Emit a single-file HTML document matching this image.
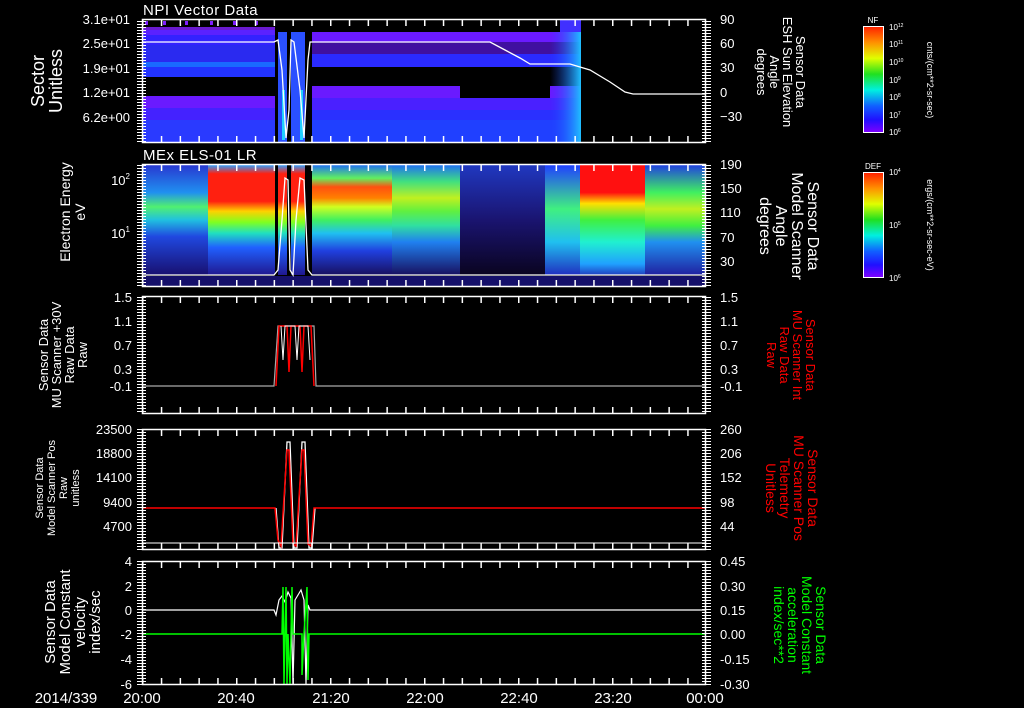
<!DOCTYPE html>
<html><head><meta charset="utf-8"><style>
html,body{margin:0;padding:0;background:#000;}
svg{display:block;}
text{font-family:"Liberation Sans",sans-serif;fill:#fff;}
</style></head><body>
<svg width="1024" height="708" viewBox="0 0 1024 708" xmlns="http://www.w3.org/2000/svg">
<defs>
<pattern id="xt" x="142" y="0" width="18.8" height="10" patternUnits="userSpaceOnUse"><rect width="1.5" height="10" fill="#fff"/></pattern>
<pattern id="yt" x="0" y="0" width="10" height="3" patternUnits="userSpaceOnUse"><rect width="10" height="1" fill="#fff"/></pattern>
<linearGradient id="cb" x1="0" y1="0" x2="0" y2="1">
<stop offset="0" stop-color="#ff2000"/><stop offset="0.15" stop-color="#ff9000"/><stop offset="0.3" stop-color="#e0ff00"/><stop offset="0.45" stop-color="#20e020"/><stop offset="0.6" stop-color="#00f0e0"/><stop offset="0.75" stop-color="#1060ff"/><stop offset="0.88" stop-color="#2010ff"/><stop offset="1" stop-color="#8000ff"/></linearGradient>
<linearGradient id="g1" x1="0" y1="0" x2="0" y2="1"><stop offset="0" stop-color="#2838d0"/><stop offset="0.25" stop-color="#2090f0"/><stop offset="0.38" stop-color="#50f070"/><stop offset="0.5" stop-color="#20c0e0"/><stop offset="0.65" stop-color="#2048e0"/><stop offset="1" stop-color="#181070"/></linearGradient>
<linearGradient id="g2" x1="0" y1="0" x2="0" y2="1"><stop offset="0" stop-color="#30a0ff"/><stop offset="0.08" stop-color="#ff2010"/><stop offset="0.33" stop-color="#ff2010"/><stop offset="0.42" stop-color="#ffd000"/><stop offset="0.52" stop-color="#80ff20"/><stop offset="0.62" stop-color="#20e0c0"/><stop offset="0.75" stop-color="#2060ff"/><stop offset="1" stop-color="#201890"/></linearGradient>
<linearGradient id="g3" x1="0" y1="0" x2="0" y2="1"><stop offset="0" stop-color="#2070f0"/><stop offset="0.12" stop-color="#60f060"/><stop offset="0.2" stop-color="#ff5010"/><stop offset="0.3" stop-color="#ff8000"/><stop offset="0.38" stop-color="#d0ff20"/><stop offset="0.5" stop-color="#40f060"/><stop offset="0.62" stop-color="#20c0f0"/><stop offset="0.78" stop-color="#2040e0"/><stop offset="1" stop-color="#181060"/></linearGradient>
<linearGradient id="g3b" x1="0" y1="0" x2="0" y2="1"><stop offset="0" stop-color="#2070f0"/><stop offset="0.15" stop-color="#40e080"/><stop offset="0.3" stop-color="#c0f020"/><stop offset="0.42" stop-color="#60f040"/><stop offset="0.55" stop-color="#30e0a0"/><stop offset="0.7" stop-color="#2080f0"/><stop offset="1" stop-color="#181060"/></linearGradient>
<linearGradient id="g4" x1="0" y1="0" x2="0" y2="1"><stop offset="0" stop-color="#2040ff"/><stop offset="0.4" stop-color="#40f080"/><stop offset="0.7" stop-color="#20c0f0"/><stop offset="1" stop-color="#2030c0"/></linearGradient>
<linearGradient id="g5" x1="0" y1="0" x2="0" y2="1"><stop offset="0" stop-color="#ff1010"/><stop offset="0.25" stop-color="#ff1010"/><stop offset="0.35" stop-color="#ffe000"/><stop offset="0.5" stop-color="#40f040"/><stop offset="0.7" stop-color="#20f0d0"/><stop offset="0.9" stop-color="#20a0ff"/><stop offset="1" stop-color="#2040c0"/></linearGradient>
<linearGradient id="g6" x1="0" y1="0" x2="0" y2="1"><stop offset="0" stop-color="#2040e0"/><stop offset="0.25" stop-color="#40f060"/><stop offset="0.4" stop-color="#c0f020"/><stop offset="0.55" stop-color="#40f040"/><stop offset="0.7" stop-color="#2090f0"/><stop offset="1" stop-color="#2020a0"/></linearGradient>
<linearGradient id="gs" x1="0" y1="0" x2="0" y2="1"><stop offset="0" stop-color="#2038c0"/><stop offset="0.5" stop-color="#1a1470"/><stop offset="1" stop-color="#0a0420"/></linearGradient>
<linearGradient id="gc" x1="0" y1="0" x2="1" y2="0"><stop offset="0" stop-color="#2040ff" stop-opacity="0"/><stop offset="1" stop-color="#20c0ff"/></linearGradient>
</defs>

<g>
<rect x="143" y="30" width="132" height="5" fill="#5a22ff"/>
<rect x="143" y="35" width="132" height="10" fill="#3322ff"/>
<rect x="143" y="45" width="132" height="17" fill="#2a2af0"/>
<rect x="143" y="62" width="132" height="5" fill="#1a6aff"/>
<rect x="143" y="67" width="132" height="10" fill="#2233ff"/>
<rect x="143" y="96" width="132" height="12" fill="#6a1aff"/>
<rect x="143" y="108" width="132" height="12" fill="#4422ff"/>
<rect x="143" y="120" width="132" height="22" fill="#2a3aff"/>
<rect x="145" y="21" width="3" height="4" fill="#8020ff"/><rect x="163" y="21" width="3" height="4" fill="#8020ff"/><rect x="185" y="21" width="3" height="4" fill="#8020ff"/><rect x="210" y="21" width="3" height="4" fill="#8020ff"/><rect x="233" y="21" width="3" height="4" fill="#8020ff"/><rect x="255" y="21" width="3" height="4" fill="#8020ff"/>
<rect x="143" y="27" width="132" height="3" fill="#6a1ad0"/>
<rect x="278" y="32" width="9" height="110" fill="#2a50ff"/>
<rect x="291" y="32" width="14" height="110" fill="#2a50ff"/>
<rect x="282" y="90" width="3" height="50" fill="#20d0ff"/>
<rect x="300" y="90" width="3" height="50" fill="#20d0ff"/>
<rect x="312" y="32" width="269" height="10" fill="#6a1aff"/>
<rect x="312" y="42" width="269" height="12" fill="#4010a0"/>
<rect x="312" y="54" width="269" height="13" fill="#2a2aff"/>
<rect x="312" y="86" width="269" height="12" fill="#6a1aff"/>
<rect x="460" y="86" width="90" height="12" fill="#000"/>
<rect x="312" y="98" width="269" height="12" fill="#4a20ff"/>
<rect x="312" y="110" width="269" height="10" fill="#2a30ff"/>
<rect x="312" y="120" width="269" height="22" fill="#2040ff"/>
<rect x="550" y="32" width="31" height="110" fill="url(#gc)"/>
<rect x="560" y="19" width="21" height="13" fill="#4030ff"/>
<polyline fill="none" stroke="#fff" stroke-width="1.3" points="143,42 274,42 278,40 282,70 286,138 289,110 291,40 294,42 300,90 304,138 308,60 310,42 490,42 505,50 520,58 530,64 570,64 590,70 610,82 625,92 633,94 705,94"/>
</g>

<g>
<rect x="143" y="165" width="65" height="110" fill="url(#g1)"/>
<rect x="208" y="165" width="67" height="110" fill="url(#g2)"/>
<rect x="278" y="165" width="9" height="110" fill="url(#g2)"/>
<rect x="291" y="165" width="14" height="110" fill="url(#g2)"/>
<rect x="312" y="165" width="80" height="110" fill="url(#g3)"/>
<rect x="392" y="165" width="68" height="110" fill="url(#g3b)"/>
<rect x="460" y="165" width="85" height="110" fill="url(#gs)"/>
<rect x="545" y="165" width="35" height="110" fill="url(#g4)"/>
<rect x="580" y="165" width="65" height="110" fill="url(#g5)"/>
<rect x="645" y="165" width="60" height="110" fill="url(#g6)"/>
<rect x="143" y="276" width="562" height="10" fill="#15106a"/>
<polyline fill="none" stroke="#fff" stroke-width="1.3" points="143,275 274,275 278,270 282,220 285,178 288,180 290,270 293,275 296,220 300,178 304,180 308,270 312,275 705,275"/>
</g>

<polyline fill="none" stroke="#aaa" stroke-width="1.2" points="143,386 274,386 278,326 314,326 316,386 705,386"/>
<polyline fill="none" stroke="#f00" stroke-width="1.5" points="276,386 279,326 287,326 289,372 291,326 300,326 302,372 304,326 311,326 314,386"/>
<polyline fill="none" stroke="#fff" stroke-width="1" points="281,326 283,360 285,326 295,326 297,360 299,326 308,326 310,360"/>

<polyline fill="none" stroke="#fff" stroke-width="1.3" points="276,508 279,548 282,548 287,442 290,442 294,548 297,548 302,442 305,442 309,548 312,548 315,508"/>
<polyline fill="none" stroke="#f00" stroke-width="1.5" points="143,508 275,508 278,540 281,546 287,450 289,450 293,544 296,546 302,450 304,450 308,544 311,546 314,508 705,508"/>
<line x1="143" y1="543" x2="705" y2="543" stroke="#fff" stroke-width="1"/>

<polyline fill="none" stroke="#fff" stroke-width="1.2" points="143,610 274,610 276,615 279,600 282,596 285,602 288,592 291,598 293,684 295,600 298,595 301,590 304,600 306,684 308,605 310,610 705,610"/>
<polyline fill="none" stroke="#0f0" stroke-width="1.5" points="143,634 282,634 283,587 284,684 285,634 286,587 287,684 288,634 290,684 291,634 292,587 293,634 302,634 302,675 304,634 307,587 308,680 309,634 705,634"/>

<g fill="none" stroke="#fff" stroke-width="1.5">
<rect x="142.5" y="19.5" width="563" height="123"/>
<rect x="142.5" y="164.5" width="563" height="122"/>
<rect x="142.5" y="296.5" width="563" height="117"/>
<rect x="142.5" y="429.5" width="563" height="120"/>
<rect x="142.5" y="561.5" width="563" height="123"/>
</g>
<g>
<rect x="142" y="20" width="564" height="6" fill="url(#xt)"/><rect x="142" y="136" width="564" height="6" fill="url(#xt)"/>
<rect x="142" y="165" width="564" height="6" fill="url(#xt)"/><rect x="142" y="280" width="564" height="6" fill="url(#xt)"/>
<rect x="142" y="297" width="564" height="6" fill="url(#xt)"/><rect x="142" y="407" width="564" height="6" fill="url(#xt)"/>
<rect x="142" y="430" width="564" height="6" fill="url(#xt)"/><rect x="142" y="543" width="564" height="6" fill="url(#xt)"/>
<rect x="142" y="562" width="564" height="6" fill="url(#xt)"/><rect x="142" y="678" width="564" height="6" fill="url(#xt)"/>
<rect x="137" y="19" width="9" height="124" fill="url(#yt)"/><rect x="702" y="19" width="9" height="124" fill="url(#yt)"/>
<rect x="137" y="164" width="9" height="123" fill="url(#yt)"/><rect x="702" y="164" width="9" height="123" fill="url(#yt)"/>
<rect x="137" y="296" width="9" height="118" fill="url(#yt)"/><rect x="702" y="296" width="9" height="118" fill="url(#yt)"/>
<rect x="137" y="429" width="9" height="121" fill="url(#yt)"/><rect x="702" y="429" width="9" height="121" fill="url(#yt)"/>
<rect x="137" y="561" width="9" height="124" fill="url(#yt)"/><rect x="702" y="561" width="9" height="124" fill="url(#yt)"/>
</g>

<text x="143" y="15" font-size="15" letter-spacing="0.5">NPI Vector Data</text>
<text x="143" y="160" font-size="15" letter-spacing="0.5">MEx ELS-01 LR</text>

<g font-size="13" text-anchor="end">
<text x="130" y="24">3.1e+01</text><text x="130" y="48">2.5e+01</text><text x="130" y="73">1.9e+01</text><text x="130" y="97">1.2e+01</text><text x="130" y="122">6.2e+00</text>
<text x="130" y="185">10<tspan font-size="8" dy="-6">2</tspan></text><text x="130" y="238">10<tspan font-size="8" dy="-6">1</tspan></text>
<text x="132" y="302">1.5</text><text x="132" y="326">1.1</text><text x="132" y="350">0.7</text><text x="132" y="374">0.3</text><text x="132" y="391">-0.1</text>
<text x="132" y="434">23500</text><text x="132" y="458">18800</text><text x="132" y="482">14100</text><text x="132" y="507">9400</text><text x="132" y="531">4700</text>
<text x="132" y="566">4</text><text x="132" y="591">2</text><text x="132" y="615">0</text><text x="132" y="639">-2</text><text x="132" y="664">-4</text><text x="132" y="689">-6</text>
</g>
<g font-size="13">
<text x="720" y="24">90</text><text x="720" y="48">60</text><text x="720" y="72">30</text><text x="720" y="97">0</text><text x="720" y="121">−30</text>
<text x="720" y="169">190</text><text x="720" y="193">150</text><text x="720" y="217">110</text><text x="720" y="242">70</text><text x="720" y="266">30</text>
<text x="720" y="302">1.5</text><text x="720" y="326">1.1</text><text x="720" y="350">0.7</text><text x="720" y="374">0.3</text><text x="720" y="391">-0.1</text>
<text x="720" y="434">260</text><text x="720" y="458">206</text><text x="720" y="482">152</text><text x="720" y="507">98</text><text x="720" y="531">44</text>
<text x="720" y="566">0.45</text><text x="720" y="591">0.30</text><text x="720" y="615">0.15</text><text x="720" y="639">0.00</text><text x="720" y="664">-0.15</text><text x="720" y="689">-0.30</text>
</g>

<g font-size="15" text-anchor="middle">
<text x="66" y="703">2014/339</text>
<text x="142" y="703">20:00</text><text x="236" y="703">20:40</text><text x="331" y="703">21:20</text><text x="425" y="703">22:00</text><text x="519" y="703">22:40</text><text x="613" y="703">23:20</text><text x="705" y="703">00:00</text>
</g>

<g text-anchor="middle">
<text transform="translate(44,81) rotate(-90)" font-size="18">Sector</text>
<text transform="translate(62,81) rotate(-90)" font-size="18">Unitless</text>
<text transform="translate(70,212) rotate(-90)" font-size="14">Electron Energy</text>
<text transform="translate(85,212) rotate(-90)" font-size="14">eV</text>
<text transform="translate(48,355) rotate(-90)" font-size="13">Sensor Data</text>
<text transform="translate(61,355) rotate(-90)" font-size="13">MU Scanner +30V</text>
<text transform="translate(74,355) rotate(-90)" font-size="13">Raw Data</text>
<text transform="translate(87,355) rotate(-90)" font-size="13">Raw</text>
<text transform="translate(43,488) rotate(-90)" font-size="11">Sensor Data</text>
<text transform="translate(55,488) rotate(-90)" font-size="11">Model Scanner Pos</text>
<text transform="translate(67,488) rotate(-90)" font-size="11">Raw</text>
<text transform="translate(79,488) rotate(-90)" font-size="11">unitless</text>
<text transform="translate(55,622) rotate(-90)" font-size="15">Sensor Data</text>
<text transform="translate(70,622) rotate(-90)" font-size="15">Model Constant</text>
<text transform="translate(85,622) rotate(-90)" font-size="15">velocity</text>
<text transform="translate(100,622) rotate(-90)" font-size="15">index/sec</text>
</g>
<g text-anchor="middle">
<text transform="translate(796,72) rotate(90)" font-size="13">Sensor Data</text>
<text transform="translate(783,72) rotate(90)" font-size="13">ESH Sun Elevation</text>
<text transform="translate(770,72) rotate(90)" font-size="13">Angle</text>
<text transform="translate(757,72) rotate(90)" font-size="13">degrees</text>
<text transform="translate(808,226) rotate(90)" font-size="16">Sensor Data</text>
<text transform="translate(792,226) rotate(90)" font-size="16">Model Scanner</text>
<text transform="translate(776,226) rotate(90)" font-size="16">Angle</text>
<text transform="translate(760,226) rotate(90)" font-size="16">degrees</text>
<text transform="translate(806,355) rotate(90)" font-size="13" style="fill:#f00">Sensor Data</text>
<text transform="translate(793,355) rotate(90)" font-size="13" style="fill:#f00">MU Scanner Int</text>
<text transform="translate(780,355) rotate(90)" font-size="13" style="fill:#f00">Raw Data</text>
<text transform="translate(767,355) rotate(90)" font-size="13" style="fill:#f00">Raw</text>
<text transform="translate(808,488) rotate(90)" font-size="14" style="fill:#f00">Sensor Data</text>
<text transform="translate(794,488) rotate(90)" font-size="14" style="fill:#f00">MU Scanner Pos</text>
<text transform="translate(780,488) rotate(90)" font-size="14" style="fill:#f00">Telemetry</text>
<text transform="translate(766,488) rotate(90)" font-size="14" style="fill:#f00">Unitless</text>
<text transform="translate(816,625) rotate(90)" font-size="14" style="fill:#0f0">Sensor Data</text>
<text transform="translate(802,625) rotate(90)" font-size="14" style="fill:#0f0">Model Constant</text>
<text transform="translate(788,625) rotate(90)" font-size="14" style="fill:#0f0">acceleration</text>
<text transform="translate(774,625) rotate(90)" font-size="14" style="fill:#0f0">index/sec**2</text>
</g>

<rect x="863.5" y="26.5" width="20" height="106" fill="url(#cb)" stroke="#fff" stroke-width="1"/>
<text x="873" y="23" font-size="8" text-anchor="middle">NF</text>
<g font-size="8">
<text x="889" y="30">10<tspan font-size="5" dy="-3">12</tspan></text><text x="889" y="47">10<tspan font-size="5" dy="-3">11</tspan></text><text x="889" y="65">10<tspan font-size="5" dy="-3">10</tspan></text><text x="889" y="83">10<tspan font-size="5" dy="-3">9</tspan></text><text x="889" y="100">10<tspan font-size="5" dy="-3">8</tspan></text><text x="889" y="118">10<tspan font-size="5" dy="-3">7</tspan></text><text x="889" y="135">10<tspan font-size="5" dy="-3">6</tspan></text>
</g>
<text transform="translate(927,80) rotate(90)" font-size="9" text-anchor="middle">cnts/(cm**2-sr-sec)</text>
<rect x="863.5" y="172.5" width="20" height="105" fill="url(#cb)" stroke="#fff" stroke-width="1"/>
<text x="873" y="169" font-size="8" text-anchor="middle">DEF</text>
<g font-size="8">
<text x="889" y="175">10<tspan font-size="5" dy="-3">4</tspan></text><text x="889" y="228">10<tspan font-size="5" dy="-3">5</tspan></text><text x="889" y="281">10<tspan font-size="5" dy="-3">6</tspan></text>
</g>
<text transform="translate(927,225) rotate(90)" font-size="9" text-anchor="middle">ergs/(cm**2-sr-sec-eV)</text>
</svg>
</body></html>
